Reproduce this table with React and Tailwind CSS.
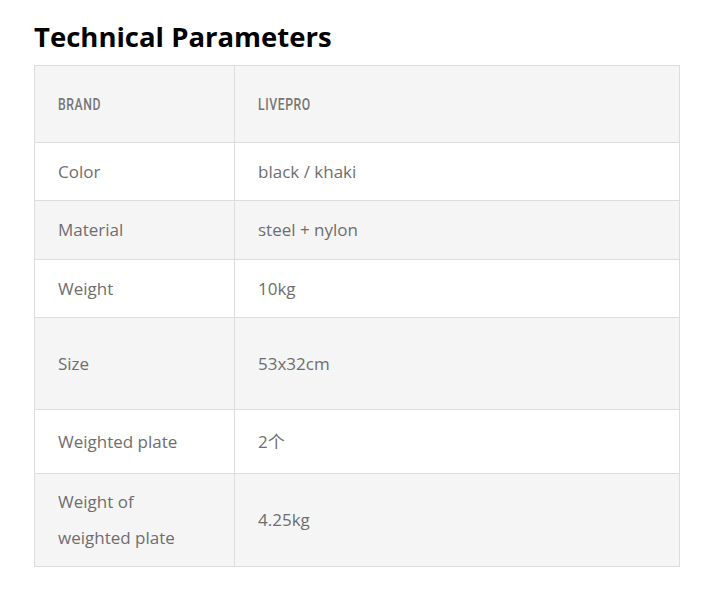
export default function App() {
  const rows = [
    { k: "Color", v: "black / khaki", h: "h-[58px]", bg: "bg-white" },
    { k: "Material", v: "steel + nylon", h: "h-[59px]", bg: "bg-[#f5f5f5]" },
    { k: "Weight", v: "10kg", h: "h-[58px]", bg: "bg-white" },
    { k: "Size", v: "53x32cm", h: "h-[92px]", bg: "bg-[#f5f5f5]" },
    { k: "Weighted plate", v: "2个", h: "h-[64px]", bg: "bg-white" },
    { k: "Weight of weighted plate", v: "4.25kg", h: "h-[93px]", bg: "bg-[#f5f5f5]" },
  ];
  return (
    <div className="min-h-screen bg-white px-[34px] pt-[18px] font-['Open_Sans','Noto_Sans_CJK_SC',sans-serif]">
      <h2 className="text-[27.5px] font-bold leading-[38px] text-black">Technical Parameters</h2>
      <table className="mt-[9px] w-[646px] border-collapse border border-[#dddddd] text-[17px] text-[#6e6e6e]">
        <thead>
          <tr className="h-[77px] bg-[#f5f5f5]">
            <th className="w-[200px] border border-[#dddddd] pl-[23px] pr-[40px] text-left">
              <span className="inline-block origin-left scale-x-[0.72] font-['Roboto',sans-serif] text-[17px] font-medium uppercase tracking-[0.8px] text-[#777777]">
                Brand
              </span>
            </th>
            <th className="border border-[#dddddd] px-[23px] text-left">
              <span className="inline-block origin-left scale-x-[0.72] font-['Roboto',sans-serif] text-[17px] font-medium uppercase tracking-[0.8px] text-[#777777]">
                Livepro
              </span>
            </th>
          </tr>
        </thead>
        <tbody>
          {rows.map((r) => (
            <tr key={r.k} className={`${r.h} ${r.bg}`}>
              <td className="border border-[#dddddd] pl-[23px] pr-[40px] leading-[36px]">{r.k}</td>
              <td className="border border-[#dddddd] px-[23px] leading-[36px]">{r.v}</td>
            </tr>
          ))}
        </tbody>
      </table>
    </div>
  );
}
